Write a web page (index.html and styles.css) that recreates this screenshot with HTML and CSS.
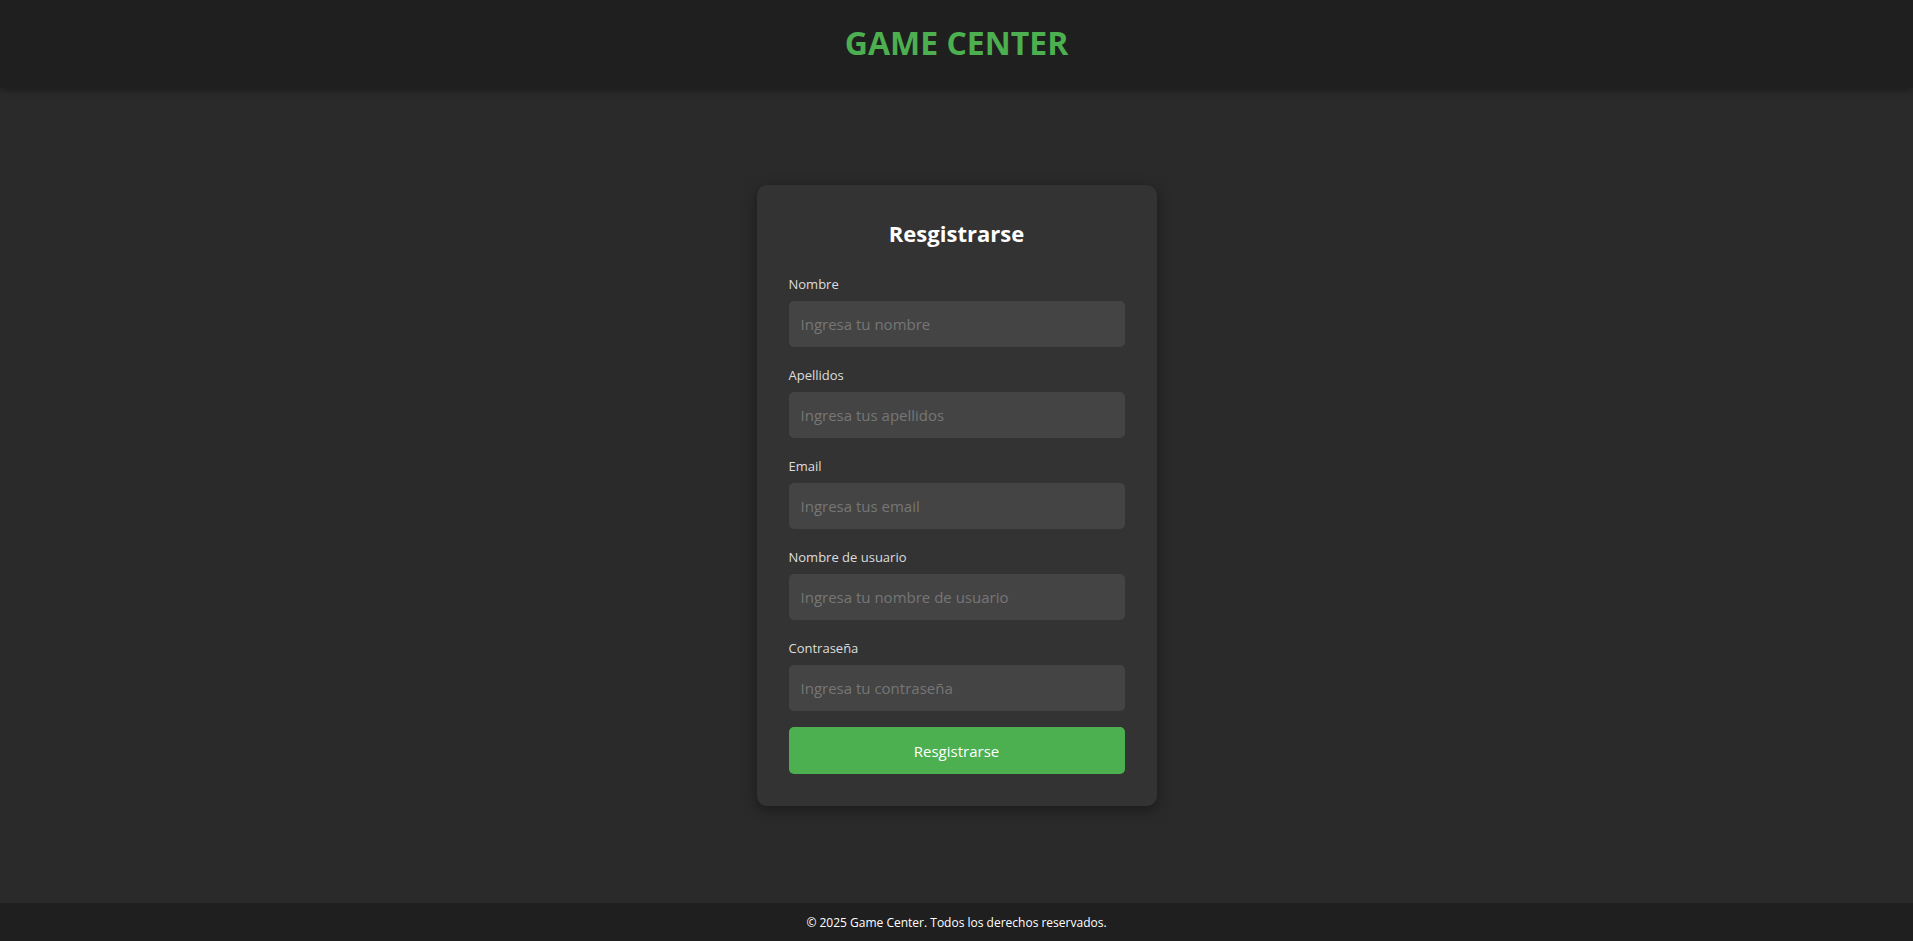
FILE: index.html
```html
<!DOCTYPE html>
<html lang="es">
<head>
<meta charset="utf-8">
<title>Game Center</title>
<link rel="stylesheet" href="styles.css">
</head>
<body>
<header class="site-header">
  <h1 class="brand">GAME CENTER</h1>
</header>
<main class="main">
  <form class="card">
    <h2 class="card-title">Resgistrarse</h2>
    <div class="form-group">
      <label class="label">Nombre</label>
      <input class="input" type="text" placeholder="Ingresa tu nombre">
    </div>
    <div class="form-group">
      <label class="label">Apellidos</label>
      <input class="input" type="text" placeholder="Ingresa tus apellidos">
    </div>
    <div class="form-group">
      <label class="label">Email</label>
      <input class="input" type="email" placeholder="Ingresa tus email">
    </div>
    <div class="form-group">
      <label class="label">Nombre de usuario</label>
      <input class="input" type="text" placeholder="Ingresa tu nombre de usuario">
    </div>
    <div class="form-group">
      <label class="label">Contraseña</label>
      <input class="input" type="password" placeholder="Ingresa tu contraseña">
    </div>
    <button class="btn" type="button">Resgistrarse</button>
  </form>
</main>
<footer class="site-footer">© 2025 Game Center. Todos los derechos reservados.</footer>
</body>
</html>
```
FILE: styles.css
```css
* { box-sizing: border-box; }
html, body { height: 100%; }
body {
  margin: 0;
  font-family: "Open Sans", "Noto Sans", sans-serif;
  background: #2a2a2a;
  color: #fff;
  display: flex;
  flex-direction: column;
  min-height: 941px;
}
.site-header {
  height: 88px;
  background: #1f1f1f;
  display: flex;
  align-items: center;
  justify-content: center;
  padding-bottom: 3px;
  box-shadow: 0 2px 8px rgba(0,0,0,0.35);
  position: relative;
  z-index: 1;
}
.brand {
  margin: 0;
  font-size: 32px;
  font-weight: 700;
  color: #4caf50;
}
.main {
  flex: 1;
  display: flex;
  align-items: center;
  justify-content: center;
}
.card {
  width: 400px;
  background: #333333;
  border-radius: 10px;
  padding: 32px;
  box-shadow: 0 4px 14px rgba(0,0,0,0.4);
}
.card-title {
  margin: 0 0 26px;
  text-align: center;
  font-size: 22px;
  line-height: 32px;
  font-weight: 700;
  color: #fff;
}
.form-group {
  display: flex;
  flex-direction: column;
  margin-bottom: 19px;
}
.form-group:last-of-type { margin-bottom: 16px; }
.label {
  font-size: 13px;
  line-height: 19px;
  color: #dddddd;
  margin-bottom: 7px;
}
.input {
  height: 46px;
  border: none;
  border-radius: 5px;
  background: #444444;
  padding: 0 12px;
  font-family: inherit;
  font-size: 15px;
  color: #fff;
  outline: none;
}
.input::placeholder { color: #767676; }
.btn {
  width: 100%;
  height: 47px;
  border: none;
  border-radius: 5px;
  background: #4caf50;
  color: #fff;
  font-family: inherit;
  font-size: 15px;
  cursor: pointer;
}
.site-footer {
  height: 38px;
  background: #1f1f1f;
  display: flex;
  align-items: center;
  justify-content: center;
  font-size: 12px;
  color: #fff;
}
```
